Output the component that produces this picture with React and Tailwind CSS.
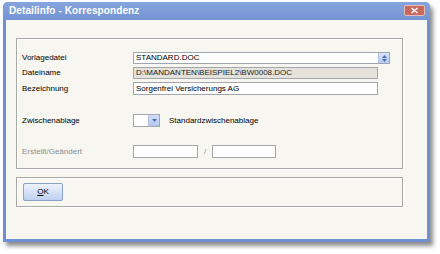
export default function App() {
  const font = { fontFamily: '"Liberation Sans", Arial, sans-serif' };
  return (
    <div className="w-[440px] h-[254px] bg-white pt-[2px] pl-[3px]" style={font}>
      <div className="w-[427px] h-[240px] flex flex-col rounded-t-[5px] bg-[#6f90d2] shadow-[3px_4px_4px_rgba(0,0,0,0.45)]">
        {/* Title bar */}
        <div className="h-[18px] flex items-center justify-between pl-[6px] pr-[5px] rounded-t-[5px] bg-gradient-to-b from-[#86a5de] to-[#7393d4]">
          <span className="text-[10px] font-bold text-white leading-none tracking-[0.1px]">Detailinfo - Korrespondenz</span>
          <div className="w-[21px] h-[11px] mt-[-1px] flex items-center justify-center bg-[#c9685d] border border-[#e8bcb5] rounded-[2px]">
            <svg width="9" height="7" viewBox="0 0 9 7">
              <path d="M1.5 1 L7.5 6 M7.5 1 L1.5 6" stroke="#fff" strokeWidth="1.6" />
            </svg>
          </div>
        </div>

        {/* Body */}
        <div className="flex-1 mx-[3px] mb-[3px] bg-[#f7f6f1] pl-[10px] pt-[18px] text-[8px] text-black">
          {/* Group 1 */}
          <div className="w-[387px] h-[131px] border border-[#a8a8a4] shadow-[inset_1px_1px_0_#fff,1px_1px_0_#fff] pl-[5px] pt-[13px]">
            <div className="flex flex-col gap-[2px]">
              <div className="flex items-center h-[12px]">
                <span className="w-[111px]">Vorlagedatei</span>
                <div className="w-[257px] h-[12px] flex bg-white border border-[#9fa6ad]">
                  <span className="flex-1 pl-[2px] leading-[10px]">STANDARD.DOC</span>
                  <div className="w-[11px] h-[10px] bg-gradient-to-b from-[#d9e4fa] to-[#b7caf1] border-l border-[#b0c0e0] flex flex-col items-center justify-center gap-[1px]">
                    <svg width="5" height="3" viewBox="0 0 5 3"><path d="M0 3 L2.5 0 L5 3Z" fill="#4d6db5" /></svg>
                    <svg width="5" height="3" viewBox="0 0 5 3"><path d="M0 0 L2.5 3 L5 0Z" fill="#4d6db5" /></svg>
                  </div>
                </div>
              </div>
              <div className="flex items-center h-[12px] mt-[1px]">
                <span className="w-[111px]">Dateiname</span>
                <div className="w-[245px] h-[12px] bg-[#e4e2da] border border-[#a3a6aa] pl-[2px] leading-[10px] text-[#222]">D:\MANDANTEN\BEISPIEL2\BW0008.DOC</div>
              </div>
              <div className="flex items-center h-[13px] mt-[1px]">
                <span className="w-[111px]">Bezeichnung</span>
                <div className="w-[245px] h-[13px] bg-white border border-[#a3a6aa] pl-[2px] leading-[11px]">Sorgenfrei Versicherungs AG</div>
              </div>
            </div>

            <div className="flex items-center h-[13px] mt-[19px]">
              <span className="w-[111px]">Zwischenablage</span>
              <div className="w-[27px] h-[13px] flex bg-white border border-[#a3a6aa]">
                <div className="flex-1" />
                <div className="w-[11px] h-[11px] bg-gradient-to-b from-[#d3def7] to-[#b4c7ef] border-l border-[#b0c0e0] flex items-center justify-center">
                  <svg width="5" height="3" viewBox="0 0 5 3"><path d="M0 0 L2.5 3 L5 0Z" fill="#4d6db5" /></svg>
                </div>
              </div>
              <span className="ml-[9px]">Standardzwischenablage</span>
            </div>

            <div className="flex items-center h-[13px] mt-[18px]">
              <span className="w-[111px] text-[#8c8c8c]">Erstellt/Geändert</span>
              <div className="w-[65px] h-[13px] bg-white border border-[#a3a6aa]" />
              <span className="w-[14px] text-center text-[#8c8c8c]">/</span>
              <div className="w-[64px] h-[13px] bg-white border border-[#a3a6aa]" />
            </div>
          </div>

          {/* Group 2 */}
          <div className="w-[387px] h-[30px] mt-[8px] border border-[#a8a8a4] shadow-[inset_1px_1px_0_#fff,1px_1px_0_#fff] pl-[6px] pt-[5px]">
            <div className="w-[40px] h-[18px] rounded-[2px] border border-[#8ba2c8] bg-gradient-to-b from-[#eef3fd] to-[#bfd0f0] flex items-center justify-center">
              <span className="text-[8px]"><span className="underline">O</span>K</span>
            </div>
          </div>
        </div>
      </div>
    </div>
  );
}
